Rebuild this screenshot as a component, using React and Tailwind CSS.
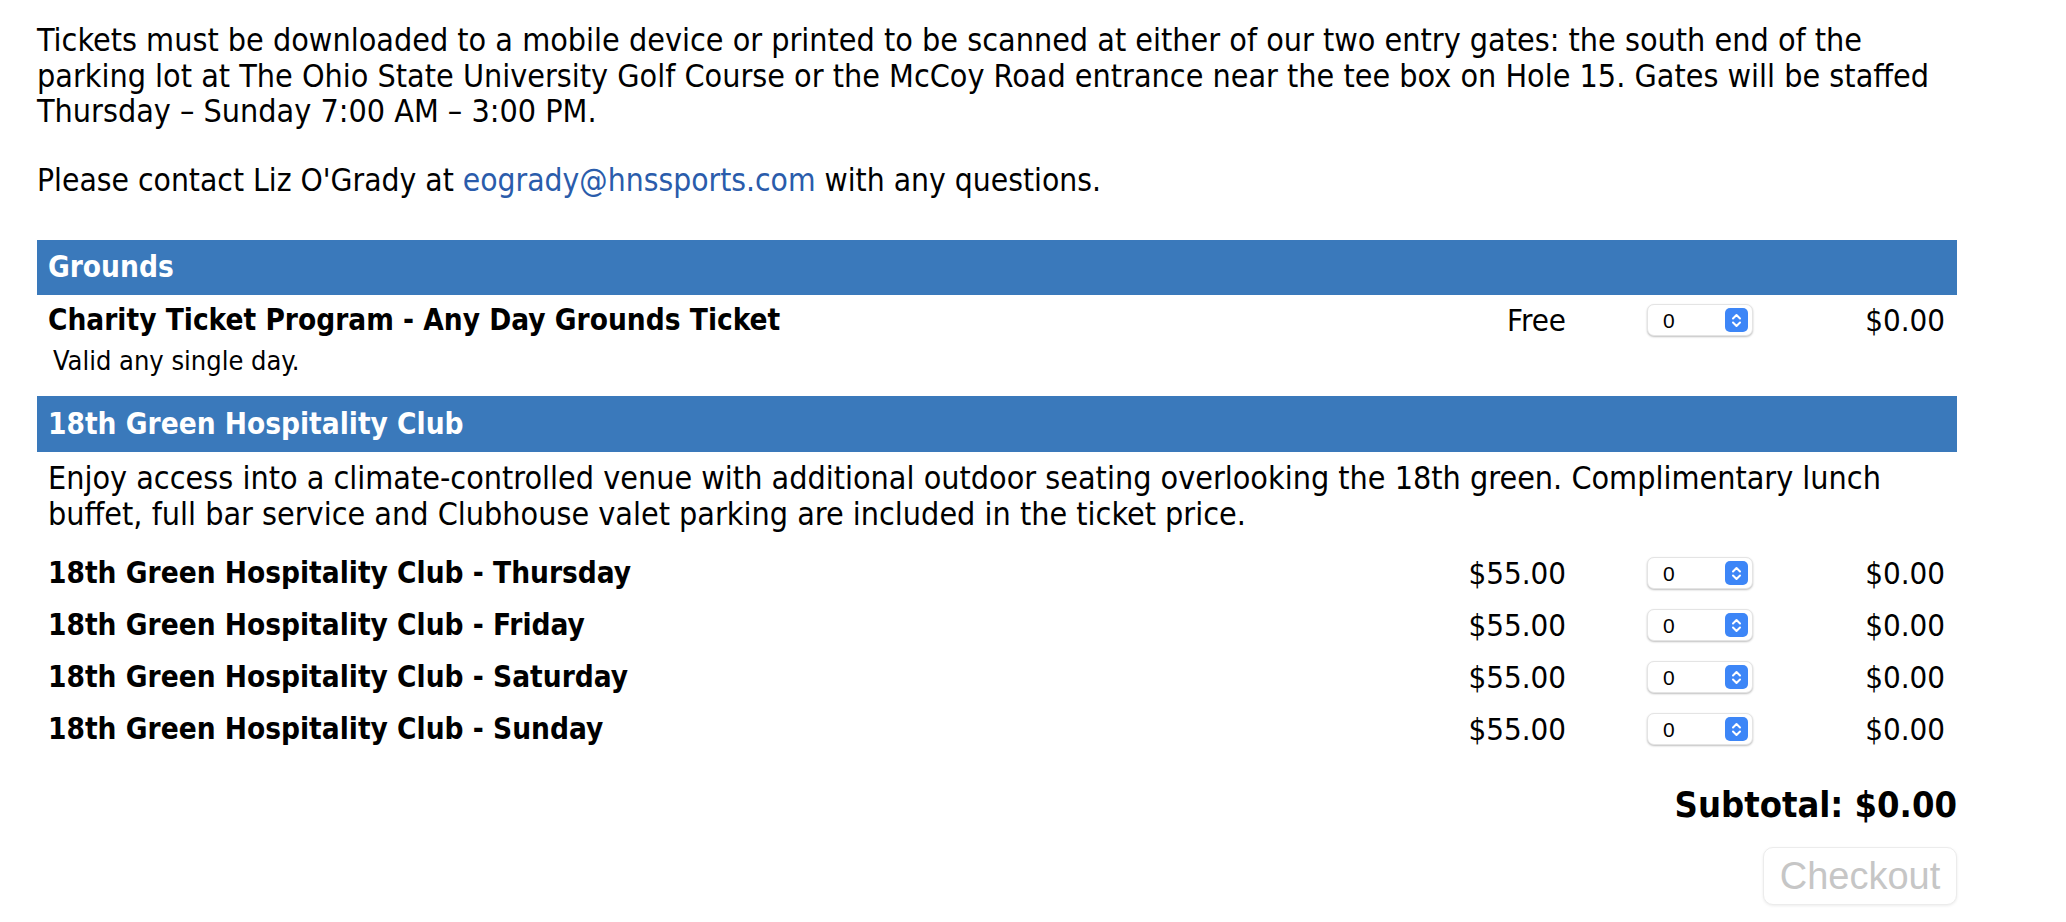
import React from 'react';

const font = { fontFamily: '"DejaVu Sans Condensed", "DejaVu Sans", sans-serif' };

const QtySelect = () => (
    <div className="w-[106px] h-[32px] flex items-center justify-between bg-white rounded-[7px] border border-[#e4e4e4] shadow-[0_1px_2px_rgba(0,0,0,0.25)] pl-[15px] pr-[4px]">
        <span className="text-[21px] leading-none text-black" style={{ fontFamily: '"Liberation Sans", Arial, sans-serif' }}>0</span>
        <span className="w-[23px] h-[24px] rounded-[5px] bg-[#3d86f7] flex items-center justify-center">
            <svg width="11" height="17" viewBox="0 0 11 17" fill="none" stroke="white" strokeWidth="2" strokeLinecap="round" strokeLinejoin="round">
                <path d="M2 6.5 L5.5 3 L9 6.5" />
                <path d="M2 10.5 L5.5 14 L9 10.5" />
            </svg>
        </span>
    </div>
);

const TicketRow = ({ name, price }) => (
    <div className="flex items-center pl-[11px] pr-[12px]">
        <div className="flex-1 font-bold text-[29.5px]">{name}</div>
        <div className="w-[160px] text-right text-[31px]">{price}</div>
        <div className="ml-[81px]">
            <QtySelect />
        </div>
        <div className="w-[192px] text-right text-[31px]">$0.00</div>
    </div>
);

const hospitality = ['Thursday', 'Friday', 'Saturday', 'Sunday'];

export default function App() {
    return (
        <div className="bg-white text-black min-h-[922px]" style={font}>
            <div className="w-[1920px] ml-[37px] pt-[23px] text-[32px]">
                {/* Intro text */}
                <p className="leading-[35.5px]">
                    Tickets must be downloaded to a mobile device or printed to be scanned at either of our two entry gates: the south end of the parking lot at The Ohio State University Golf Course or the McCoy Road entrance near the tee box on Hole 15. Gates will be staffed Thursday – Sunday 7:00 AM – 3:00 PM.
                </p>
                <p className="leading-[35.5px] mt-[33px] text-[31.5px]">
                    Please contact Liz O'Grady at <a href="#" className="text-[#2a5cab]">eogrady@hnssports.com</a> with any questions.
                </p>

                {/* Grounds */}
                <div className="mt-[42px] h-[55px] bg-[#3a79bb] text-white font-bold text-[29.5px] flex items-center pl-[11px]">
                    Grounds
                </div>
                <div className="pt-[3px] h-[101px]">
                    <div className="h-[36px] leading-[36px] mt-[4px]">
                        <TicketRow name="Charity Ticket Program - Any Day Grounds Ticket" price="Free" />
                    </div>
                    <div className="pl-[16px] text-[27px] leading-[30px] mt-[8px]">Valid any single day.</div>
                </div>

                {/* 18th Green */}
                <div className="h-[56px] bg-[#3a79bb] text-white font-bold text-[29.5px] flex items-center pl-[11px]">
                    18th Green Hospitality Club
                </div>
                <p className="pl-[11px] pr-[11px] pt-[9px] leading-[35.5px]">
                    Enjoy access into a climate-controlled venue with additional outdoor seating overlooking the 18th green. Complimentary lunch buffet, full bar service and Clubhouse valet parking are included in the ticket price.
                </p>
                <div className="mt-[15px]">
                    {hospitality.map((day) => (
                        <div key={day} className="h-[52px] flex items-center">
                            <div className="w-full">
                                <TicketRow name={`18th Green Hospitality Club - ${day}`} price="$55.00" />
                            </div>
                        </div>
                    ))}
                </div>

                {/* Subtotal */}
                <div className="mt-[27px] text-right font-bold text-[36px] leading-[46px]">Subtotal: $0.00</div>
                <div className="flex justify-end mt-[19px]">
                    <button
                        disabled
                        className="w-[194px] h-[58px] rounded-[10px] border border-[#ececec] bg-white text-[#c6c6c6] text-[38px] shadow-[0_1px_3px_rgba(0,0,0,0.08)]"
                        style={{ fontFamily: '"Liberation Sans", Arial, sans-serif' }}
                    >
                        Checkout
                    </button>
                </div>
            </div>
        </div>
    );
}
